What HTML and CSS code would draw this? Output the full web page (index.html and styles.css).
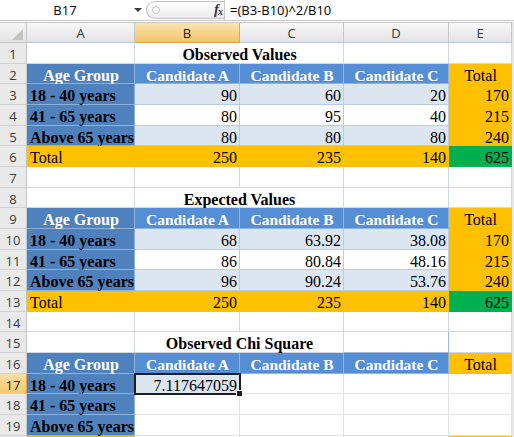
FILE: index.html
```html
<!DOCTYPE html>
<html>
<head>
<meta charset="utf-8">
<link rel="stylesheet" href="styles.css">
</head>
<body>
<div class="fbar">
  <div class="namebox">B17</div>
  <div class="nb-arrow"><span class="tri"></span></div>
  <div class="pill"><span class="grip"></span><span class="fx">f<sub>x</sub></span></div>
  <div class="formula">=(B3-B10)^2/B10</div>
</div>
<div class="gap"></div>
<div class="sheet">
  <div class="corner"><svg width="27" height="20" viewBox="0 0 27 20"><polygon points="23,6 23,17 12,17" fill="#c4c4c4"/></svg></div>
  <div class="ch">A</div><div class="ch sel">B</div><div class="ch">C</div><div class="ch">D</div><div class="ch">E</div>

  <div class="rh">1</div><div class="c"></div><div class="c title span2">Observed Values</div><div class="c"></div><div class="c"></div>
  <div class="rh">2</div><div class="c hA">Age Group</div><div class="c hB">Candidate A</div><div class="c hB">Candidate B</div><div class="c hB">Candidate C</div><div class="c gold ctr">Total</div>
  <div class="rh">3</div><div class="c lbl">18 - 40 years</div><div class="c num lt">90</div><div class="c num lt">60</div><div class="c num lt">20</div><div class="c num gold">170</div>
  <div class="rh">4</div><div class="c lbl">41 - 65 years</div><div class="c num wt">80</div><div class="c num wt">95</div><div class="c num wt">40</div><div class="c num gold">215</div>
  <div class="rh">5</div><div class="c lbl">Above 65 years</div><div class="c num lt">80</div><div class="c num lt">80</div><div class="c num lt">80</div><div class="c num gold">240</div>
  <div class="rh">6</div><div class="c gold">Total</div><div class="c num gold">250</div><div class="c num gold">235</div><div class="c num gold">140</div><div class="c num green">625</div>
  <div class="rh">7</div><div class="c"></div><div class="c"></div><div class="c"></div><div class="c"></div><div class="c"></div>
  <div class="rh">8</div><div class="c"></div><div class="c title span2">Expected Values</div><div class="c"></div><div class="c"></div>
  <div class="rh">9</div><div class="c hA">Age Group</div><div class="c hB">Candidate A</div><div class="c hB">Candidate B</div><div class="c hB">Candidate C</div><div class="c gold ctr">Total</div>
  <div class="rh">10</div><div class="c lbl">18 - 40 years</div><div class="c num lt">68</div><div class="c num lt">63.92</div><div class="c num lt">38.08</div><div class="c num gold">170</div>
  <div class="rh">11</div><div class="c lbl">41 - 65 years</div><div class="c num wt">86</div><div class="c num wt">80.84</div><div class="c num wt">48.16</div><div class="c num gold">215</div>
  <div class="rh">12</div><div class="c lbl">Above 65 years</div><div class="c num lt">96</div><div class="c num lt">90.24</div><div class="c num lt">53.76</div><div class="c num gold">240</div>
  <div class="rh">13</div><div class="c gold">Total</div><div class="c num gold">250</div><div class="c num gold">235</div><div class="c num gold">140</div><div class="c num green">625</div>
  <div class="rh">14</div><div class="c"></div><div class="c"></div><div class="c"></div><div class="c"></div><div class="c"></div>
  <div class="rh">15</div><div class="c"></div><div class="c title span2">Observed Chi Square</div><div class="c boxed"></div><div class="c"></div>
  <div class="rh">16</div><div class="c hA">Age Group</div><div class="c hB">Candidate A</div><div class="c hB">Candidate B</div><div class="c hB">Candidate C</div><div class="c gold ctr">Total</div>
  <div class="rh sel">17</div><div class="c lbl">18 - 40 years</div><div class="c num lt cur">7.117647059</div><div class="c g"></div><div class="c g"></div><div class="c g"></div>
  <div class="rh">18</div><div class="c lbl">41 - 65 years</div><div class="c g"></div><div class="c g"></div><div class="c g"></div><div class="c g"></div>
  <div class="rh">19</div><div class="c lbl">Above 65 years</div><div class="c g"></div><div class="c g"></div><div class="c g"></div><div class="c g"></div>
  <div class="rh"></div><div class="c gold"></div><div class="c"></div><div class="c"></div><div class="c"></div><div class="c gold"></div>
</div>
</body>
</html>
```

FILE: styles.css
```css
html, body {
  margin: 0;
  padding: 0;
}
body {
  width: 514px;
  height: 437px;
  overflow: hidden;
  background: #e6e6e6;
  font-family: "Liberation Serif", "Times New Roman", serif;
}

/* formula bar */
.fbar {
  display: flex;
  height: 20px;
  background: #fff;
  border-bottom: 1px solid #c9c9c9;
  font-family: "Open Sans", "Liberation Sans", sans-serif;
  color: #000;
}
.namebox {
  width: 130px;
  text-align: center;
  font-size: 13px;
  line-height: 21px;
}
.nb-arrow {
  width: 16px;
  display: flex;
  align-items: center;
  justify-content: center;
}
.tri {
  width: 0;
  height: 0;
  border-left: 4px solid transparent;
  border-right: 4px solid transparent;
  border-top: 4px solid #3c3c3c;
}
.pill {
  box-sizing: border-box;
  width: 78px;
  height: 18px;
  margin-top: 1px;
  border: 1px solid #c2c2c2;
  border-right: none;
  border-radius: 9px 0 0 9px;
  background: linear-gradient(#ffffff, #ebebeb);
  display: flex;
  align-items: center;
  justify-content: space-between;
  padding: 0 2px 0 5px;
}
.grip {
  width: 6px;
  height: 6px;
  border-radius: 50%;
  border: 1px solid #c8c8c8;
  background: #f4f4f4;
}
.fx {
  font-family: "Liberation Serif", serif;
  font-style: italic;
  font-weight: bold;
  font-size: 15px;
  color: #3a3a3a;
  line-height: 16px;
  letter-spacing: -1px;
}
.fx sub {
  font-size: 10px;
  vertical-align: -1px;
}
.formula {
  flex: 1;
  border-left: 1px solid #c9c9c9;
  padding-left: 5px;
  font-size: 13px;
  line-height: 21px;
}
.gap {
  height: 1px;
  background: #fff;
}

/* sheet */
.sheet {
  display: grid;
  width: 512px;
  grid-template-columns: 27px 108px 105px 104px 105px 63px;
  grid-template-rows: 20px;
  grid-auto-rows: 20.68px;
  border-top: 1px solid #c9c9c9;
  background: #fff;
}
.corner {
  box-sizing: border-box;
  background: linear-gradient(#f5f5f5, #e3e3e3);
  border-right: 1px solid #c5c5c5;
  border-bottom: 1px solid #c5c5c5;
  line-height: 0;
}
.ch {
  box-sizing: border-box;
  background: linear-gradient(#f7f7f7, #e3e3e3);
  border-right: 1px solid #c5c5c5;
  border-bottom: 1px solid #b9c6d6;
  text-align: center;
  font-family: "Open Sans", "Liberation Sans", sans-serif;
  font-size: 13px;
  line-height: 20px;
  color: #3b3b3b;
}
.ch.sel {
  background: linear-gradient(#fae3b0, #f2c46a);
  border-right-color: #e0a94c;
  border-bottom: 1px solid #f29d38;
  color: #222;
}
.rh {
  box-sizing: border-box;
  background: #e9e9e9;
  border-right: 1px solid #c5c5c5;
  border-bottom: 1px solid #d0d0d0;
  text-align: center;
  font-family: "Open Sans", "Liberation Sans", sans-serif;
  font-size: 13px;
  padding-top: 1px;
  line-height: 21px;
  color: #3b3b3b;
}
.rh.sel {
  background: linear-gradient(#f9dea6, #f3c86d);
  border-right-color: #f29d38;
  color: #222;
}

.c {
  box-sizing: border-box;
  border-right: 1px solid #d0d7e5;
  border-bottom: 1px solid #d0d7e5;
  font-size: 16px;
  padding: 2px 2px 0 3px;
  line-height: 20px;
  white-space: nowrap;
  color: #000;
}
.c.g {
  border-color: #e2e2e2;
}
.span2 {
  grid-column: span 2;
}
.title {
  font-weight: bold;
  text-align: center;
}
.boxed {
  border-right-color: #9db9dd;
  border-bottom-color: #9db9dd;
}
.hA {
  background: #4f81bd;
  color: #fff;
  font-weight: bold;
  text-align: center;
  border-color: #8db0dc;
}
.hB {
  background: #558ed5;
  color: #fff;
  font-weight: bold;
  text-align: center;
  font-size: 15.5px;
  border-color: #8db4e2;
}
.lbl {
  background: #4f81bd;
  color: #000;
  font-weight: bold;
  border-color: #8db0dc;
  padding-left: 3px;
}
.num {
  text-align: right;
}
.lt {
  background: #dce6f1;
  border-color: #b8cce4;
}
.wt {
  background: #fff;
  border-color: #b8cce4;
}
.gold {
  background: #ffc000;
  border-color: #ffc000;
}
.green {
  background: #00b050;
  border-color: #00b050;
}
.ctr {
  text-align: center;
}
.cur {
  position: relative;
  outline: 2px solid #1e1e1e;
  outline-offset: -1px;
}
.cur::after {
  content: "";
  position: absolute;
  right: -4px;
  bottom: -4px;
  width: 5px;
  height: 5px;
  background: #1e1e1e;
  border: 1px solid #fff;
}
```
